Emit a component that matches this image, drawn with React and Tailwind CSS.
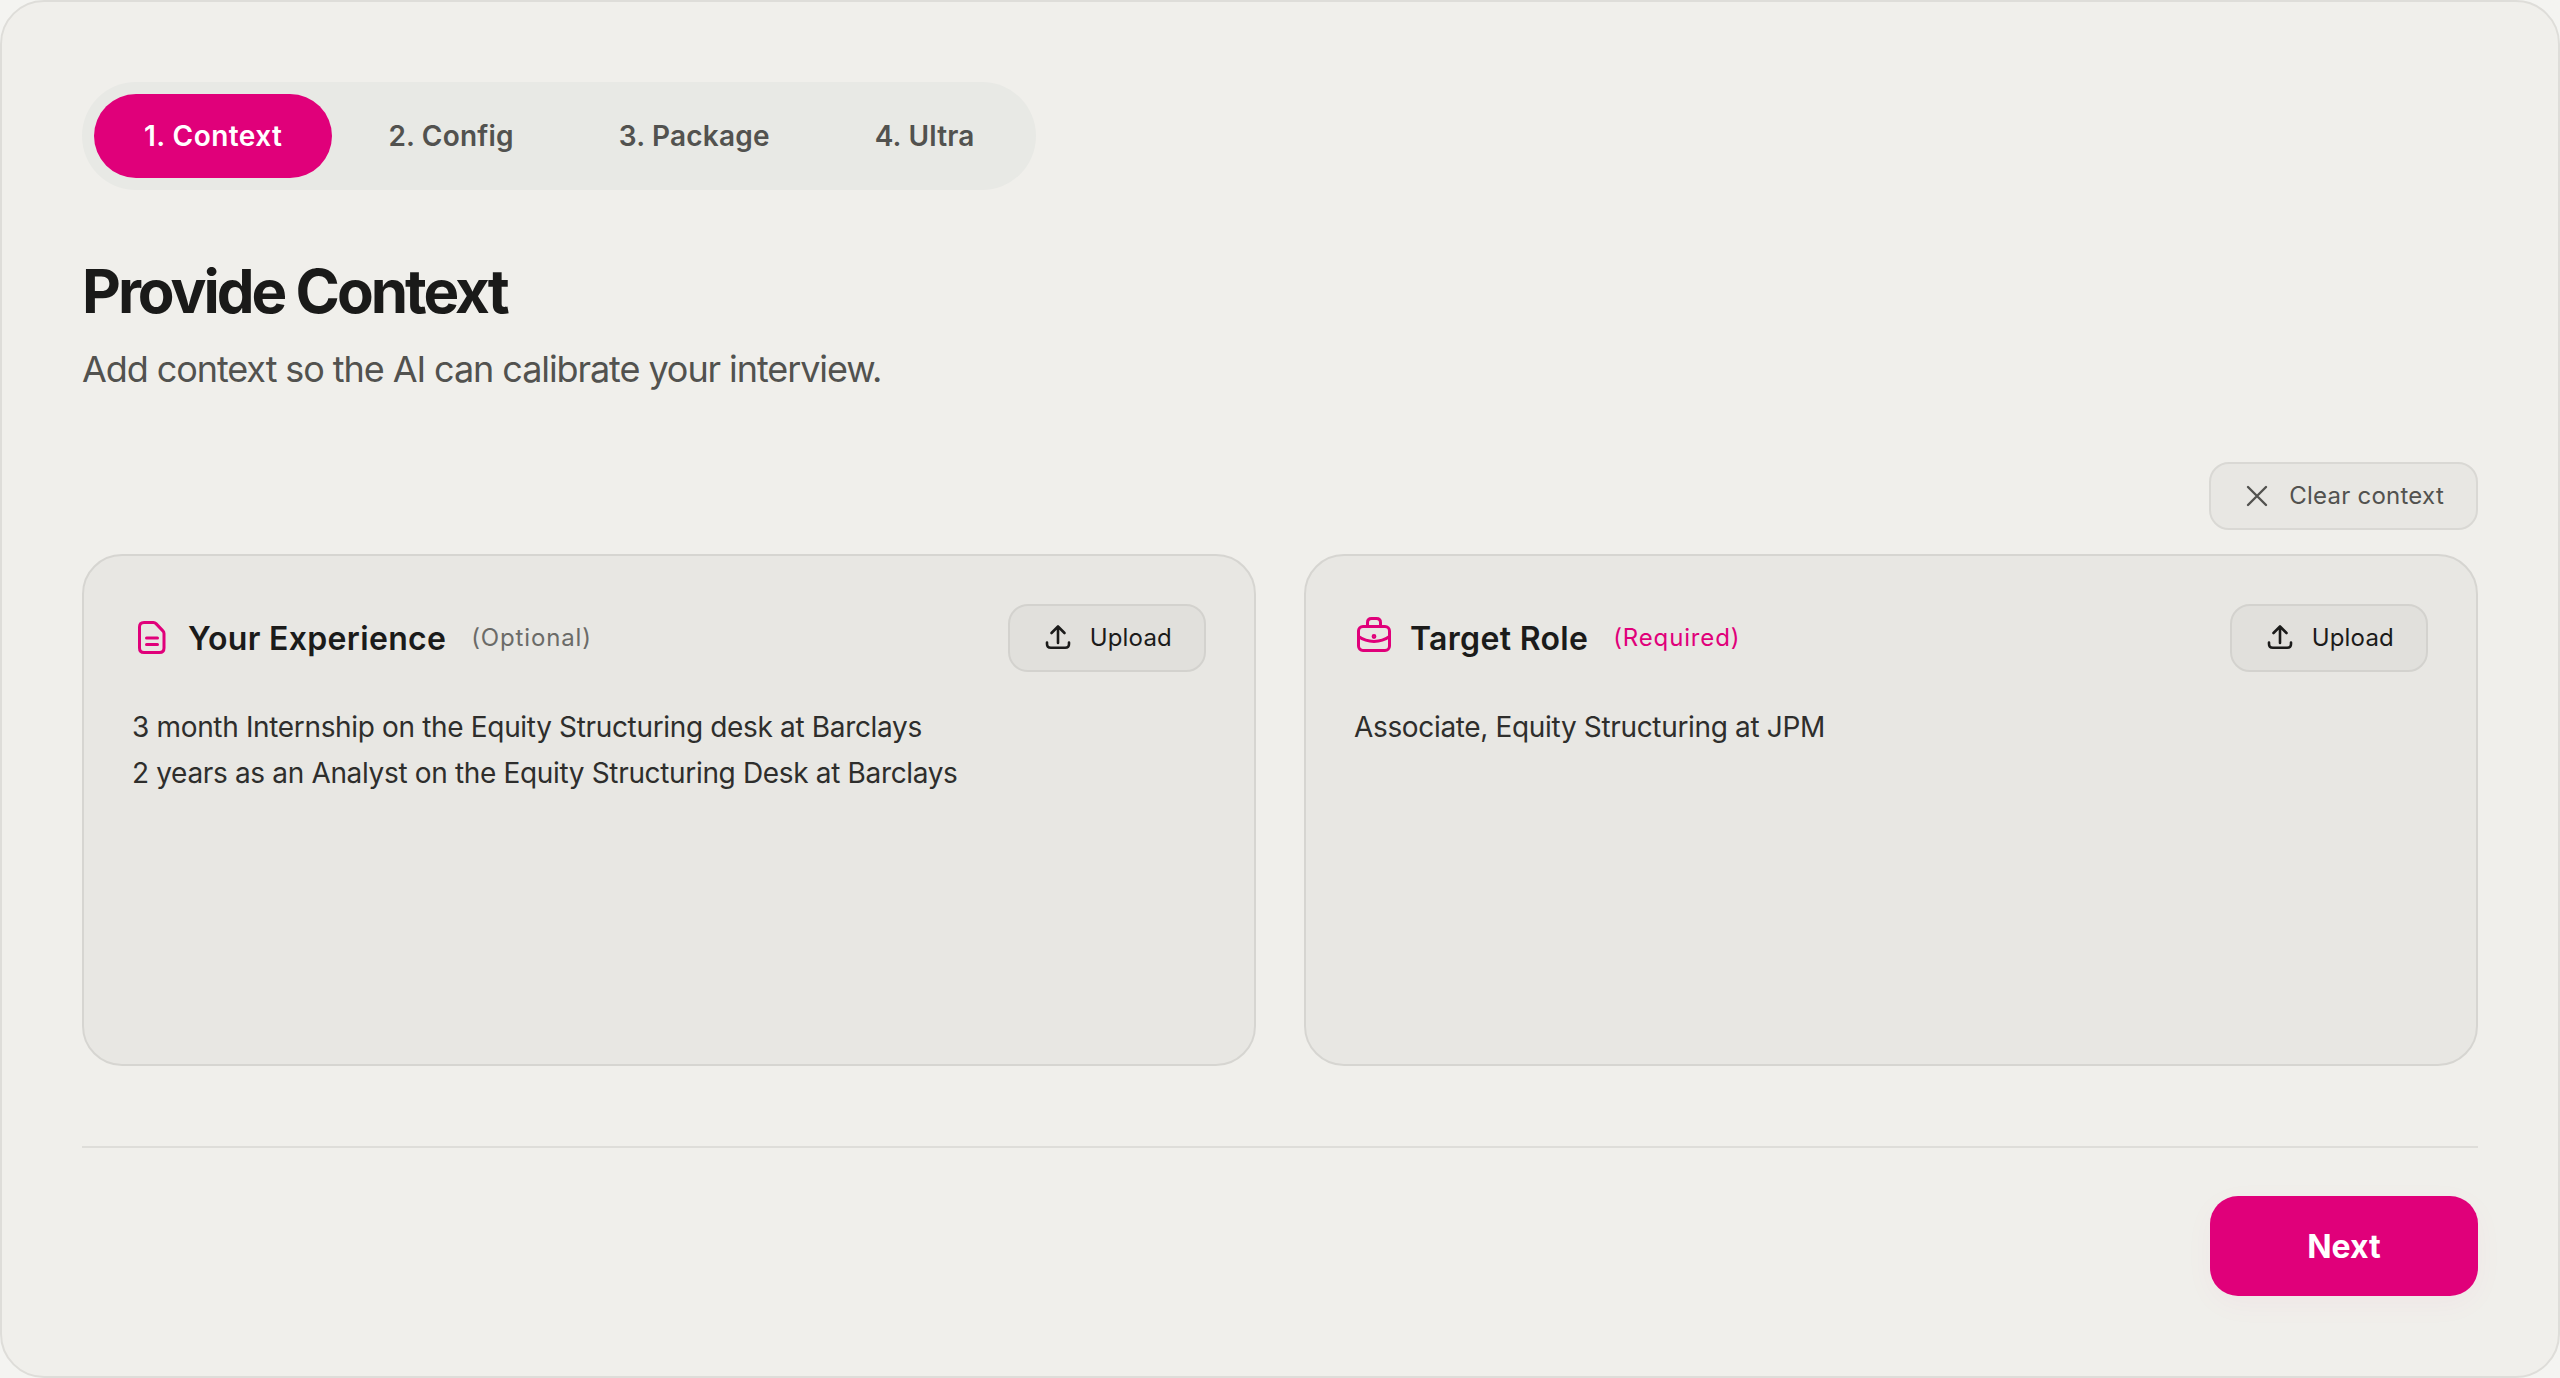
const PINK = '#E0007A';

const steps = ['1. Context', '2. Config', '3. Package', '4. Ultra'];

const DocIcon = () => (
  <svg width="40" height="40" viewBox="0 0 40 40" fill="none" stroke={PINK} strokeWidth="3" strokeLinecap="round" strokeLinejoin="round" className="shrink-0">
    <path d="M12 4.500h9.500c1 0 1.800.4 2.500 1.100l6.900 7.300c.7.7 1.100 1.500 1.100 2.500V30c0 2.800-1.700 4.500-4.500 4.500H12c-2.800 0-4.500-1.700-4.500-4.500V9c0-2.800 1.700-4.500 4.500-4.500z" />
    <path d="M14.500 20h11M14.500 26.500h11" />
  </svg>
);

const CaseIcon = () => (
  <svg width="40" height="40" viewBox="0 0 40 40" fill="none" stroke={PINK} strokeWidth="3" strokeLinecap="round" strokeLinejoin="round" className="shrink-0 -translate-y-[2px]">
    <path d="M13.500 10V6.500c0-2.500 1.500-4 4-4h5c2.500 0 4 1.500 4 4V10" />
    <rect x="4.500" y="10.500" width="31" height="24" rx="4.500" />
    <path d="M4.500 20.500c9 6.500 22 6.500 31 0" />
    <circle cx="20" cy="20.500" r="0.900" fill={PINK} />
  </svg>
);

const UploadIcon = () => (
  <svg width="28" height="28" viewBox="0 0 28 28" fill="none" stroke="#1b1b1a" strokeWidth="2.600" strokeLinecap="round" strokeLinejoin="round" className="shrink-0">
    <path d="M14 19V2.500M7.500 9L14 2.500 20.500 9" />
    <path d="M3 18.500v1.500c0 2.300 1.500 3.800 3.800 3.800h14.400c2.300 0 3.800-1.500 3.800-3.800v-1.500" />
  </svg>
);

const CloseIcon = () => (
  <svg width="28" height="28" viewBox="0 0 28 28" fill="none" stroke="#52524F" strokeWidth="2.400" strokeLinecap="round" className="shrink-0">
    <path d="M5 5l18 18M23 5L5 23" />
  </svg>
);

const Card = ({ icon, title, tag, tagClass, lines }) => (
  <div className="h-[512px] rounded-[40px] border-2 border-[#D6D5D1] bg-[#E8E7E3] p-12">
    <div className="flex h-[68px] items-center justify-between">
      <div className="flex items-center">
        {icon}
        <span className="ml-4 pt-[2px] text-[32px] font-semibold tracking-[0.32px] text-[#1b1b1a]">{title}</span>
        <span className={`ml-[25px] text-[24px] tracking-[0.85px] ${tagClass}`}>{tag}</span>
      </div>
      <button className="flex h-[68px] items-center gap-[18px] rounded-[20px] border-2 border-[#D3D2CE] bg-[#E1E0DC] pr-8 pl-[34px] text-[24px] tracking-[0.2px] text-[#1b1b1a]">
        <UploadIcon />
        Upload
      </button>
    </div>
    <div className="mt-[32px] text-[28px] leading-[46px] tracking-[-0.34px] text-[#2e2e2c]">
      {lines.map((l) => (
        <div key={l}>{l}</div>
      ))}
    </div>
  </div>
);

export default function App() {
  return (
    <div className="h-screen w-full bg-[#F4F4F1] font-['Inter',sans-serif]">
      <div className="flex h-full flex-col rounded-[44px] border-2 border-[#DEDDD9] bg-[#F0EFEB] p-20">
        {/* stepper */}
        <div className="flex h-[108px] w-[954px] items-center gap-[7px] rounded-full bg-[#E8E9E5] p-3">
          {steps.map((s, i) => (
            <div
              key={s}
              className={
                i === 0
                  ? 'flex h-[84px] items-center whitespace-nowrap rounded-full bg-[#E0007A] px-[50px] text-[28px] font-semibold tracking-[0.45px] text-white'
                  : 'flex h-[84px] items-center whitespace-nowrap rounded-full px-[49px] text-[28px] font-semibold tracking-[0.2px] text-[#52524F]'
              }
            >
              {s}
            </div>
          ))}
        </div>

        <h1 className="mt-[65px] text-[60px] leading-[72px] font-bold tracking-[-3px] text-[#1a1a19]">Provide Context</h1>
        <p className="mt-[18px] text-[36px] leading-[48px] tracking-[-1.080px] text-[#52524F]">Add context so the AI can calibrate your interview.</p>

        <div className="mt-[69px] flex justify-end">
          <button className="flex h-[68px] items-center gap-[18px] rounded-[20px] border-2 border-[#D9D8D4] bg-[#E8E7E3] px-8 text-[24px] tracking-[0.25px] text-[#52524F]">
            <CloseIcon />
            Clear context
          </button>
        </div>

        <div className="mt-6 grid grid-cols-2 gap-12">
          <Card
            icon={<DocIcon />}
            title="Your Experience"
            tag="(Optional)"
            tagClass="text-[#6b6b68]"
            lines={['3 month Internship on the Equity Structuring desk at Barclays', '2 years as an Analyst on the Equity Structuring Desk at Barclays']}
          />
          <Card
            icon={<CaseIcon />}
            title="Target Role"
            tag="(Required)"
            tagClass="text-[#E0007A]"
            lines={['Associate, Equity Structuring at JPM']}
          />
        </div>

        <div className="mt-20 flex justify-end border-t-2 border-[#DEDDD9] pt-12">
          <button className="h-[100px] w-[268px] rounded-[28px] bg-[#E0007A] pt-[2px] text-[32px] font-bold text-white shadow-[0_8px_30px_rgba(224,0,122,0.04)]">
            Next
          </button>
        </div>
      </div>
    </div>
  );
}
